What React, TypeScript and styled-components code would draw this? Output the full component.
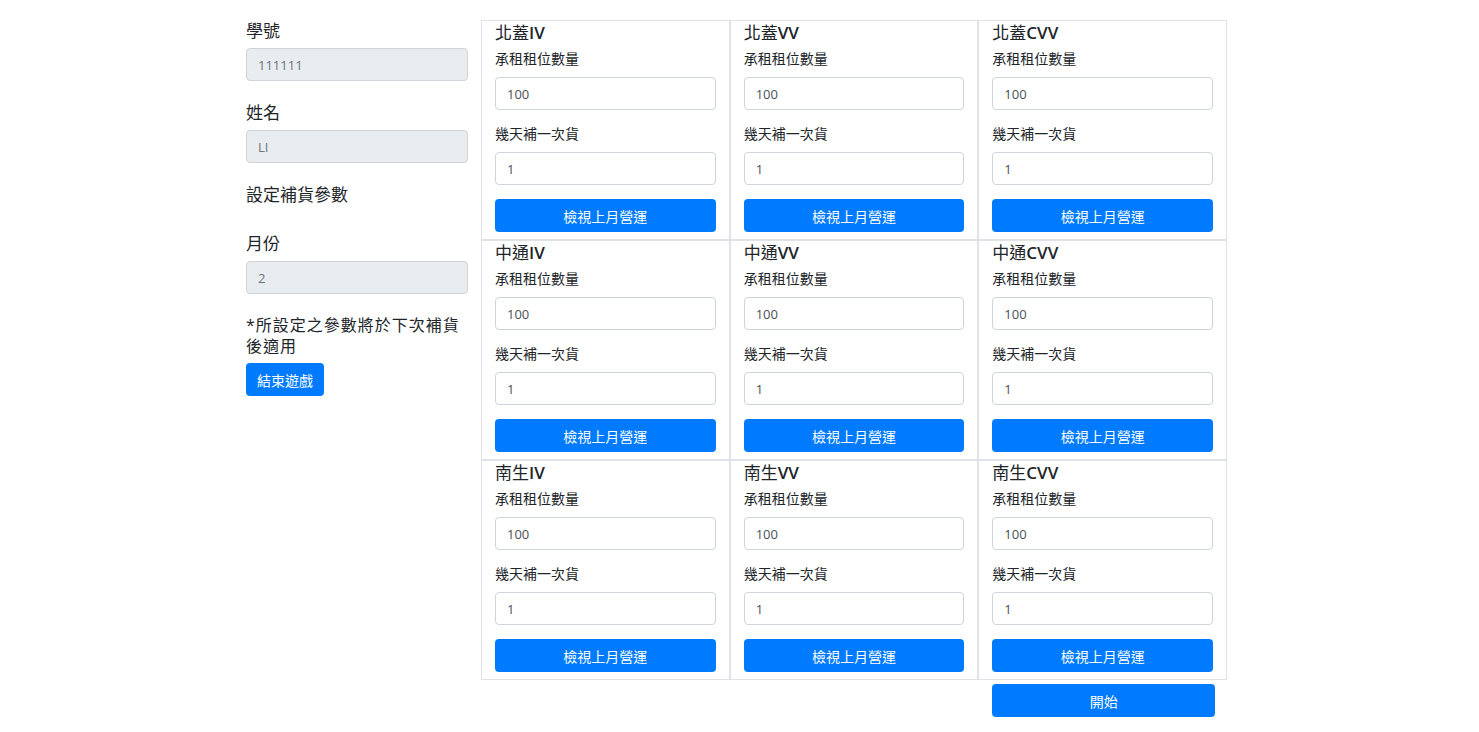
import React from "react";
import styled, { createGlobalStyle } from "styled-components";

const GlobalStyle = createGlobalStyle`
  body {
    margin: 0;
    background: #fff;
    color: #212529;
    font-family: "Open Sans", "Noto Sans CJK TC", sans-serif;
  }
  * { box-sizing: border-box; }
`;

const Page = styled.div`
  display: flex;
  justify-content: center;
  padding-right: 6px;
`;

const Layout = styled.div`
  display: flex;
  gap: 13px;
  width: 981px;
`;

const Side = styled.div`
  width: 222px;
  padding-top: 19px;
  display: flex;
  flex-direction: column;
`;

const SideLabel = styled.div<{ gapTop?: number }>`
  font-size: 17px;
  line-height: 24px;
  margin-top: ${(p) => p.gapTop ?? 0}px;
  margin-bottom: 5px;
`;

const ReadOnlyInput = styled.input`
  width: 100%;
  height: 33px;
  padding: 0 11px;
  border: 1px solid #ced4da;
  border-radius: 4px;
  background: #e9ecef;
  color: #6c757d;
  font-family: inherit;
  font-size: 13px;
  margin-bottom: 20px;
`;

const Notice = styled.p`
  margin: 1px 0 6px;
  font-size: 16px;
  line-height: 21px;
  letter-spacing: 1px;
`;

const Button = styled.button<{ block?: boolean }>`
  height: 33px;
  width: ${(p) => (p.block ? "100%" : "auto")};
  padding: 0 11px;
  border: none;
  border-radius: 4px;
  background: #007bff;
  color: #fff;
  font-family: inherit;
  font-size: 14px;
  cursor: pointer;
`;

const Main = styled.div`
  width: 746px;
  padding-top: 20px;
`;

const Grid = styled.div`
  display: grid;
  grid-template-columns: repeat(3, 1fr);
`;

const Card = styled.div`
  height: 220px;
  border: 1px solid #dfe2e6;
  padding: 1px 13px 7px;
  display: flex;
  flex-direction: column;
`;

const CardTitle = styled.div`
  font-size: 17px;
  line-height: 22px;
  font-weight: 400;
  margin-bottom: 4px;
`;

const Kind = styled.span`
  font-weight: 600;
`;

const FieldLabel = styled.div`
  font-size: 14px;
  line-height: 21px;
  margin-bottom: 8px;
`;

const Field = styled.input`
  width: 100%;
  height: 33px;
  padding: 0 11px;
  border: 1px solid #ced4da;
  border-radius: 4px;
  background: #fff;
  color: #495057;
  font-family: inherit;
  font-size: 13px;
  margin-bottom: 13px;
  &:last-of-type {
    margin-bottom: 14px;
  }
`;

const Footer = styled.div`
  display: grid;
  grid-template-columns: repeat(3, 1fr);
  margin-top: 4px;
`;

const FooterCell = styled.div`
  grid-column: 3;
  padding: 0 12px 0 14px;
`;

const regions = ["北蓋", "中通", "南生"];
const kinds = ["IV", "VV", "CVV"];

export default function App() {
  return (
    <>
      <GlobalStyle />
      <Page>
        <Layout>
          <Side>
            <SideLabel>學號</SideLabel>
            <ReadOnlyInput readOnly value="111111" />
            <SideLabel>姓名</SideLabel>
            <ReadOnlyInput readOnly value="LI" />
            <SideLabel>設定補貨參數</SideLabel>
            <SideLabel gapTop={20}>月份</SideLabel>
            <ReadOnlyInput readOnly value="2" />
            <Notice>*所設定之參數將於下次補貨後適用</Notice>
            <div>
              <Button>結束遊戲</Button>
            </div>
          </Side>
          <Main>
            <Grid>
              {regions.map((r) =>
                kinds.map((k) => (
                  <Card key={r + k}>
                    <CardTitle>
                      {r}
                      <Kind>{k}</Kind>
                    </CardTitle>
                    <FieldLabel>承租租位數量</FieldLabel>
                    <Field defaultValue="100" />
                    <FieldLabel>幾天補一次貨</FieldLabel>
                    <Field defaultValue="1" />
                    <Button block>檢視上月營運</Button>
                  </Card>
                ))
              )}
            </Grid>
            <Footer>
              <FooterCell>
                <Button block>開始</Button>
              </FooterCell>
            </Footer>
          </Main>
        </Layout>
      </Page>
    </>
  );
}
